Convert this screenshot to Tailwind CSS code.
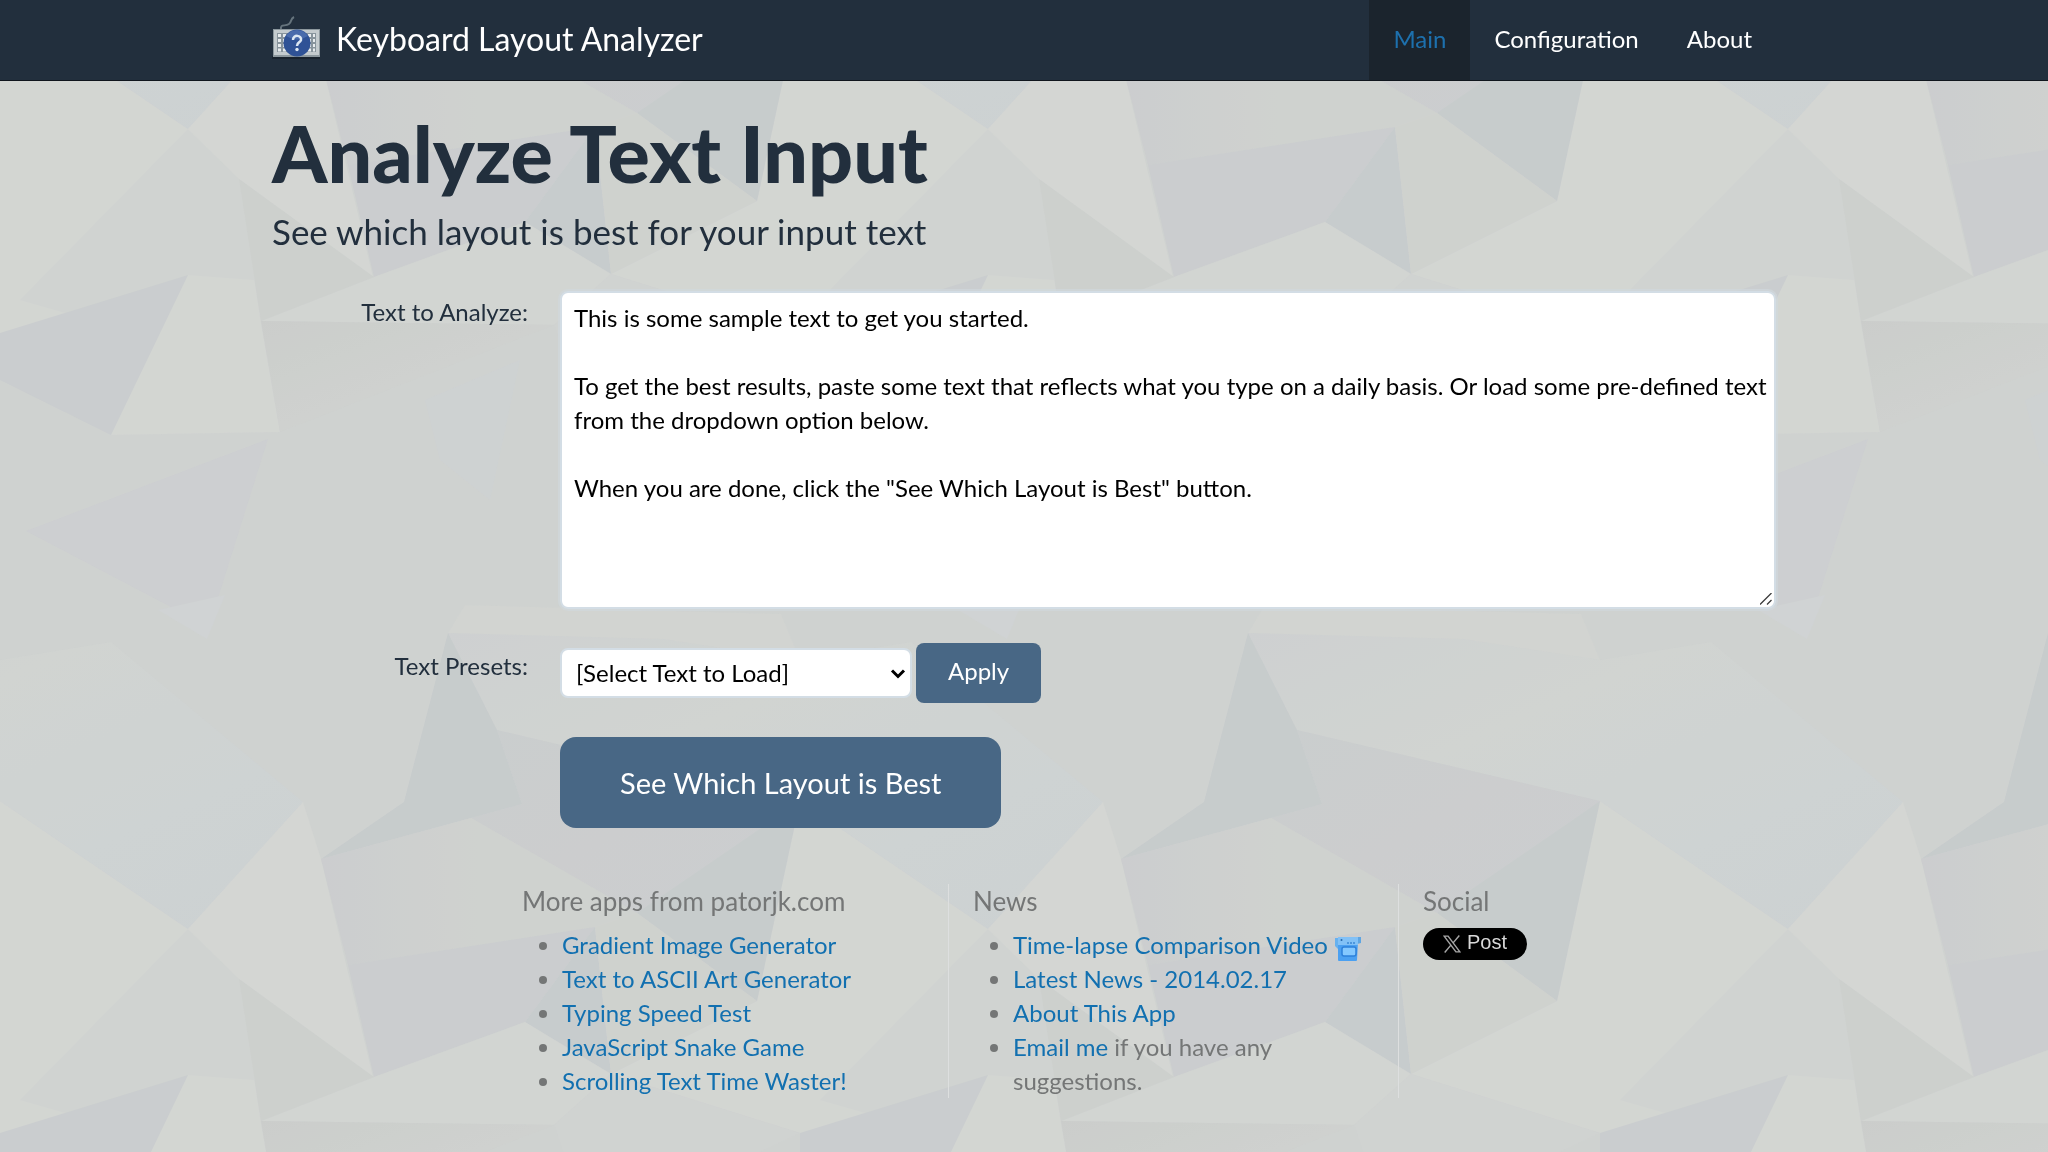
<!DOCTYPE html>
<html lang="en">
<head>
    <meta charset="UTF-8">
    <meta name="viewport" content="width=device-width, initial-scale=1.0">
    <title>Keyboard Layout Analyzer</title>
    <script src="https://cdn.jsdelivr.net/npm/@tailwindcss/browser@4"></script>
</head>
<body class="min-h-screen bg-[#cfd2d0] font-['Lato',sans-serif] text-2xl leading-[34px] text-[#222f3d]">
    <!-- Paper facet background, repeats every 800px -->
    <svg class="fixed inset-0 -z-10 h-full w-full" aria-hidden="true">
        <defs>
            <linearGradient id="pale" x1="0" y1="0" x2="1" y2="1">
                <stop offset="0" stop-color="#cdcfd1"/>
                <stop offset=".35" stop-color="#d1d4d1"/>
                <stop offset=".7" stop-color="#cdd2d4"/>
                <stop offset="1" stop-color="#cbd0d3"/>
            </linearGradient>
            <linearGradient id="fade" x1="0" y1="0" x2="1" y2="0">
                <stop offset="0" stop-color="#cacbce"/>
                <stop offset=".5" stop-color="#cfd1ce"/>
            </linearGradient>
            <linearGradient id="dusk" x1="0" y1="0" x2="1" y2="1">
                <stop offset="0" stop-color="#c8cccd"/>
                <stop offset=".5" stop-color="#cacbcd"/>
                <stop offset="1" stop-color="#c9cccf"/>
            </linearGradient>
            <linearGradient id="sand" x1="0" y1="0" x2="1" y2="1">
                <stop offset="0" stop-color="#c9cbc9"/>
                <stop offset=".6" stop-color="#cfd1cf"/>
            </linearGradient>
            <g id="facets">
                <path fill="#d4d6d3" d="M1600 801 1788 929 1839 979 1861 1123 1880 1232 1711 1235 1600 1133 1411 1074 1557 1001Z"/>
                <path fill="#d0d3d1" d="M1788 929 1839 979 1855 1080 1788 1075 1690 1120 1620 1100Z"/>
                <path fill="url(#pale)" d="M1248 633 1463 639 1600 660 1711 642 1903 802 1788 929 1600 801 1297 730Z"/>
                <path fill="#d2d4d1" d="M1248 633 1265 605 1581 614 1600 660 1463 639Z"/>
                <path fill="#d5d7d4" d="M1903 802 1921 859 1973 1077 1839 979 1788 929Z"/>
                <path fill="url(#dusk)" d="M1297 730 1600 801 1573 840 1437 913 1271 818 1322 804Z"/>
                <path fill="#c4c9cb" d="M1248 633 1297 730 1322 804 1271 818 1121 859 1204 802Z"/>
                <path fill="#c4c9cb" d="M1600 801 1557 1001 1437 913 1500 870 1573 820Z"/>
                <path fill="url(#fade)" d="M1121 859 1271 818 1437 913 1395 927 1148 965Z"/>
                <path fill="#c9cbce" d="M1148 965 1395 927 1325 1022 1174 1077Z"/>
                <path fill="#c4c9cc" d="M1395 927 1411 1074 1325 1022Z"/>
                <path fill="#cfd1cd" d="M1395 927 1437 913 1557 1001 1411 1074Z"/>
                <path fill="#d2d5d2" d="M1174 1077 1325 1022 1411 1074 1354 1125 1061 1121Z"/>
                <path fill="#d0d2d1" d="M1354 1125 1411 1074 1600 1133 1500 1180 1380 1200Z"/>
                <path fill="#c8cbce" d="M1788 1075 1600 1133 1600 1180 1711 1235Z"/>
                <path fill="url(#sand)" d="M1061 1121 1354 1125 1080 1232Z"/>
                <path fill="#cccfcc" d="M1039 979 1174 1077 1061 1121Z"/>
                <path fill="#cccdd1" d="M826 1331 1068 1239 1009 1427Z"/>
                <path fill="#d0d3d5" d="M958 1410 1007 1439 1025 1395Z"/>
                <path fill="#cdd1d3" d="M1225 1200 1320 1160 1290 1300 1240 1260Z"/>
            </g>
            <pattern id="paper" width="800" height="800" patternUnits="userSpaceOnUse">
                <use href="#facets" x="-1600"/>
                <use href="#facets" x="-800"/>
                <use href="#facets" x="-1600" y="-800"/>
                <use href="#facets" x="-800" y="-800"/>
            </pattern>
        </defs>
        <rect width="100%" height="100%" fill="url(#paper)" opacity=".75"/>
    </svg>

    <!-- Navigation -->
    <nav class="border-b border-[#10161d] bg-[#222f3d] text-white">
        <div class="mx-auto flex max-w-[1504px] items-stretch justify-between">
            <a href="#" class="flex h-20 items-center gap-4 pb-0.5 text-[32px] leading-10">
                <svg class="h-12 w-12" viewBox="0 0 48 48" aria-hidden="true">
                    <path d="M9 15c-1-7 4-3 8-6 3-2 1-5 5-7" fill="none" stroke="#66747d" stroke-width="2"/>
                    <rect x="0" y="41" width="48" height="3" fill="#19232e"/>
                    <rect x="1" y="14" width="47" height="28" fill="#8d989e"/>
                    <rect x="2" y="15" width="45" height="25" fill="#c4cbce"/>
                    <rect x="5" y="18" width="39" height="19" fill="#88949c"/>
                    <path d="M6 20.500h37M6 25.500h37M6 30.500h37M6 35h37" stroke="#e8ecee" stroke-width="3" stroke-dasharray="3 2"/>
                    <circle cx="25" cy="28" r="13.500" fill="#2f5296"/>
                    <path d="M14 21a13 13 0 0 1 22 0q-11 7-22 0Z" fill="#496bac"/>
                    <path d="M21 25c0-6 9-5 8 0-1 3-4 2-4 6" fill="none" stroke="#dbe6f2" stroke-width="2.500"/>
                    <circle cx="25" cy="34.500" r="1.700" fill="#dbe6f2"/>
                </svg>
                Keyboard Layout Analyzer
            </a>
            <ul class="flex">
                <li><a href="#main" class="flex h-20 items-center bg-[#1b242d] px-6 pb-0.5 text-[#1d70ad]">Main</a></li>
                <li><a href="#config" class="flex h-20 items-center px-6 pb-0.5">Configuration</a></li>
                <li><a href="#about" class="flex h-20 items-center px-6 pb-0.5">About</a></li>
            </ul>
        </div>
    </nav>

    <main class="mx-auto max-w-[1504px]">
        <h1 class="pt-8 text-[79px] font-black leading-20">Analyze Text Input</h1>
        <p class="pt-3.5 text-[35px] leading-12">See which layout is best for your input text</p>

        <!-- Input form -->
        <form class="grid grid-cols-[256px_1fr] gap-x-8 pt-9">
            <label for="txt" class="pt-1 text-right">Text to Analyze:</label>
            <div class="relative">
                <textarea id="txt" class="block h-[318px] w-full resize-none rounded-lg border-2 border-[#d3dde5] bg-white py-2 pr-1 pl-3 text-black outline-2 outline-[#d0d8dd]/60">This is some sample text to get you started.

To get the best results, paste some text that reflects what you type on a daily basis. Or load some pre-defined text from the dropdown option below.

When you are done, click the "See Which Layout is Best" button.</textarea>
                <svg class="pointer-events-none absolute right-1 bottom-1 h-3 w-3" viewBox="0 0 12 12" stroke="#3c3c3c" stroke-width="1.300" aria-hidden="true">
                    <path d="M0 11.500 11.500 0M7 11.500l4.500-4.500"/>
                </svg>
            </div>

            <label for="preset" class="pt-10 text-right">Text Presets:</label>
            <div class="flex items-center gap-1 pt-[34px]">
                <div class="relative">
                    <select id="preset" class="h-[50px] w-[352px] appearance-none rounded-lg border-2 border-[#d3dde5] bg-white px-3.5 text-black">
                        <option>[Select Text to Load]</option>
                    </select>
                    <svg class="pointer-events-none absolute top-5 right-1.5 h-3 w-4" viewBox="0 0 16 12" fill="none" stroke="#000" stroke-width="3" aria-hidden="true">
                        <path d="M2 2.500 8 8.500l6-6"/>
                    </svg>
                </div>
                <button type="button" class="h-15 rounded-lg bg-[#486785] px-8 pb-1 text-white">Apply</button>
            </div>

            <div class="col-start-2 pt-[34px]">
                <button type="button" class="h-[91px] rounded-2xl bg-[#486785] px-15 text-[29px] text-white">See Which Layout is Best</button>
            </div>
        </form>

        <!-- Footer columns -->
        <footer class="grid grid-cols-[450px_450px_1fr] pt-14 pl-[226px] text-[#747676] *:min-h-[206px] *:px-6">
            <section>
                <h2 class="pb-2.5 text-[26px]">More apps from patorjk.com</h2>
                <ul class="list-disc pl-10">
                    <li><a href="#" class="text-[#1270b0]">Gradient Image Generator</a></li>
                    <li><a href="#" class="text-[#1270b0]">Text to ASCII Art Generator</a></li>
                    <li><a href="#" class="text-[#1270b0]">Typing Speed Test</a></li>
                    <li><a href="#" class="text-[#1270b0]">JavaScript Snake Game</a></li>
                    <li><a href="#" class="text-[#1270b0]">Scrolling Text Time Waster!</a></li>
                </ul>
            </section>
            <section class="border-l border-[#dddfdf]">
                <h2 class="pb-2.5 text-[26px]">News</h2>
                <ul class="list-disc pl-10">
                    <li>
                        <a href="#" class="text-[#1270b0]">Time-lapse Comparison Video
                            <svg class="inline h-7 w-7 align-middle" viewBox="0 0 28 28" aria-hidden="true">
                                <path d="M1 4h5v11H4l-3-3Z" fill="#67b1ef"/>
                                <path d="M22 3h5v6l-4 1Z" fill="#5ea5e2"/>
                                <path d="M4 3h20v5l-1 18q0 1-1 1H5q-1 0-1-1Z" fill="#4ba0f1"/>
                                <path d="M4 3h20v8H4Z" fill="#82c1f6"/>
                                <path d="M13 9h9" stroke="#3d88d3" stroke-width="1.500" stroke-dasharray="2 1"/>
                                <circle cx="7.500" cy="6" r="1" fill="#2868aa"/>
                                <rect x="8" y="13" width="14" height="9" rx="2" fill="#84c8ff" stroke="#2d80da" stroke-width="1.500"/>
                            </svg>
                        </a>
                    </li>
                    <li><a href="#" class="text-[#1270b0]">Latest News - 2014.02.17</a></li>
                    <li><a href="#" class="text-[#1270b0]">About This App</a></li>
                    <li class="pr-20"><a href="#" class="text-[#1270b0]">Email me</a> if you have any suggestions.</li>
                </ul>
            </section>
            <section class="border-l border-[#dddfdf]">
                <h2 class="pb-2.5 text-[26px]">Social</h2>
                <a href="#" class="flex h-8 w-[104px] items-center justify-center gap-1.5 rounded-full bg-black pb-1 font-['Liberation_Sans',sans-serif] text-xl text-[#d8d8d8]">
                    <svg class="mt-1 h-[18px] w-[18px]" viewBox="0 0 16 16" fill="none" stroke="#a6a6a6" stroke-width="1.300" aria-hidden="true">
                        <path d="M1 1h3.500L15 15h-3.500ZM14.500.500 9 7M7 9l-5.500 6.500"/>
                    </svg>
                    Post
                </a>
            </section>
        </footer>
    </main>
</body>
</html>
